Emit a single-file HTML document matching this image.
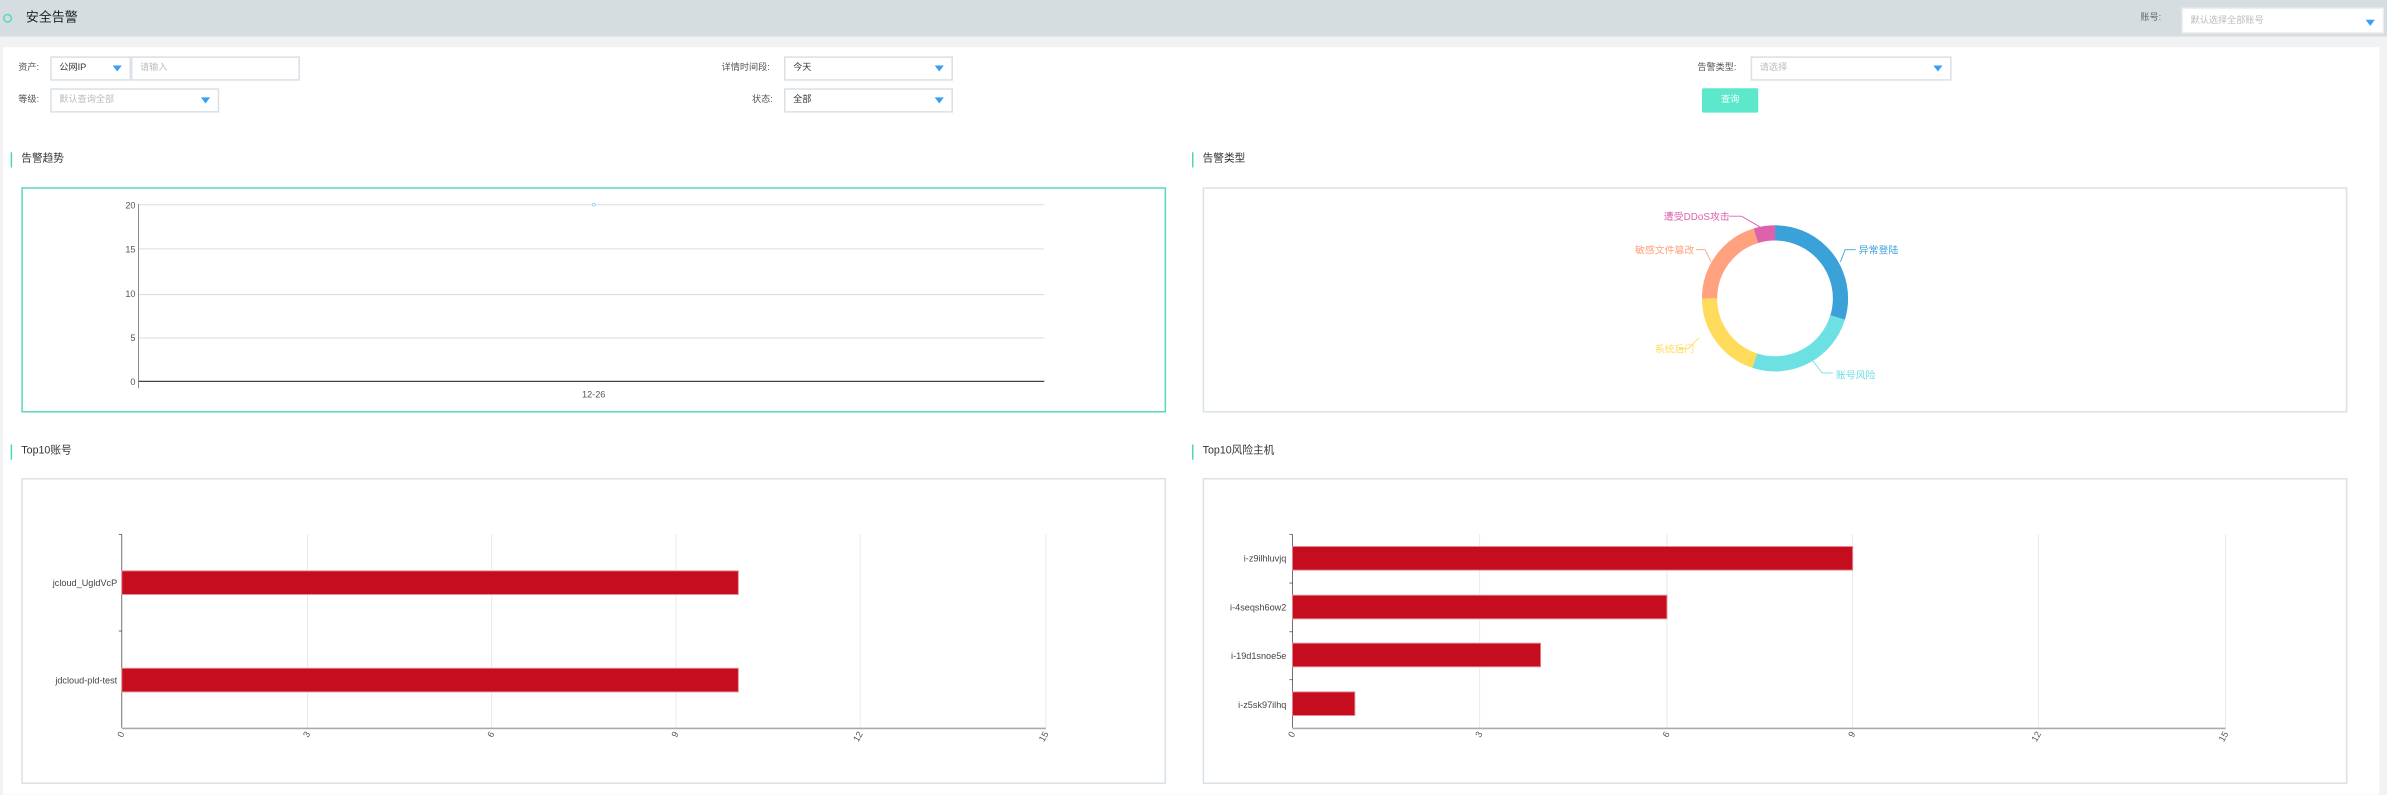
<!DOCTYPE html>
<html><head><meta charset="utf-8">
<style>
html,body{margin:0;padding:0;width:2387px;height:794px;overflow:hidden;background:#f1f2f4;}
#w{position:absolute;left:0;top:0;width:1568px;height:522px;transform:scale(1.52232);transform-origin:0 0;font-family:"Liberation Sans","Noto Sans CJK SC",sans-serif;color:#333;}
.a{position:absolute;}
.t{position:absolute;font-size:6px;color:#555;white-space:nowrap;line-height:1;}
.sel{position:absolute;background:#fff;border:1px solid #d9e0e6;box-sizing:border-box;font-size:6px;line-height:14px;padding-left:5px;color:#333;}
.ph{color:#bbb;}
.arr{position:absolute;right:5px;top:5px;width:0;height:0;border-left:3.5px solid transparent;border-right:3.5px solid transparent;border-top:4px solid #3a9ff2;}
.sec{position:absolute;font-size:7px;color:#333;padding-left:6px;border-left:1.2px solid #4fd5b8;line-height:10px;}
.card{position:absolute;background:#fff;border:1px solid #dae2e8;box-sizing:border-box;}
</style></head><body>
<div id="w">
<div class="a" style="left:0;top:0;width:1568px;height:24px;background:#d5dde1"></div>
<div class="a" style="left:2px;top:31px;width:1561px;height:491px;background:#fff"></div>
<div class="a" style="left:2px;top:8.5px;width:4px;height:4px;border:1.3px solid #5cd9bb;border-radius:50%"></div>
<div class="t" style="left:17px;top:7px;font-size:8.5px;color:#222">安全告警</div>
<div class="t" style="left:1406px;top:9px;font-size:6px;color:#666">账号:</div>
<div class="sel" style="left:1433px;top:5px;width:133px;height:17px;border-color:#eee;line-height:17px"><span class="ph">默认选择全部账号</span><div class="arr" style="top:7px"></div></div>

<div class="t" style="left:12px;top:42px">资产:</div>
<div class="sel" style="left:33px;top:37px;width:53px;height:16px">公网IP<div class="arr"></div></div>
<div class="sel" style="left:86px;top:37px;width:111px;height:16px"><span class="ph">请输入</span></div>
<div class="t" style="left:12px;top:63px">等级:</div>
<div class="sel" style="left:33px;top:58px;width:111px;height:16px"><span class="ph">默认查询全部</span><div class="arr"></div></div>
<div class="t" style="left:474px;top:42px">详情时间段:</div>
<div class="sel" style="left:515px;top:37px;width:111px;height:16px">今天<div class="arr"></div></div>
<div class="t" style="left:494px;top:63px">状态:</div>
<div class="sel" style="left:515px;top:58px;width:111px;height:16px">全部<div class="arr"></div></div>
<div class="t" style="left:1115px;top:42px">告警类型:</div>
<div class="sel" style="left:1150px;top:37px;width:132px;height:16px"><span class="ph">请选择</span><div class="arr"></div></div>
<div class="a" style="left:1118px;top:58px;width:37px;height:16px;background:#5ee8cb;border-radius:1px;color:#fff;font-size:6px;text-align:center;line-height:16px">查询</div>

<div class="sec" style="left:7px;top:100px">告警趋势</div>
<div class="sec" style="left:783px;top:100px">告警类型</div>
<div class="sec" style="left:7px;top:292px">Top10账号</div>
<div class="sec" style="left:783px;top:292px">Top10风险主机</div>

<div class="card" style="left:14px;top:123px;width:752px;height:148px;border-color:#5ad8bd"></div>
<div class="card" style="left:790px;top:123px;width:752px;height:148px"></div>
<div class="card" style="left:14px;top:314px;width:752px;height:201px"></div>
<div class="card" style="left:790px;top:314px;width:752px;height:201px"></div>

<svg class="a" style="left:0;top:0" width="1568" height="522" font-family="Liberation Sans, Noto Sans CJK SC, sans-serif">
<g stroke="#ddd" stroke-width="0.7">
<line x1="91" y1="134.5" x2="686" y2="134.5"/><line x1="91" y1="163.5" x2="686" y2="163.5"/>
<line x1="91" y1="193.5" x2="686" y2="193.5"/><line x1="91" y1="222" x2="686" y2="222"/></g>
<line x1="91" y1="250.5" x2="686" y2="250.5" stroke="#444" stroke-width="0.8"/>
<line x1="91" y1="134" x2="91" y2="255" stroke="#666" stroke-width="0.5"/>
<g font-size="6" fill="#555" text-anchor="end">
<text x="89" y="137">20</text><text x="89" y="166">15</text><text x="89" y="195">10</text><text x="89" y="224">5</text><text x="89" y="253">0</text></g>
<text x="390" y="261" font-size="6" fill="#555" text-anchor="middle">12-26</text>
<circle cx="390" cy="134.5" r="1" fill="#fff" stroke="#8ccbe8" stroke-width="0.5"/>

<g fill="none" stroke-width="10">
<circle cx="1166" cy="196" r="43" stroke="#3ba1d9" stroke-dasharray="80.3 300" transform="rotate(-90 1166 196)"/>
<circle cx="1166" cy="196" r="43" stroke="#6de0e4" stroke-dasharray="68.3 300" transform="rotate(17 1166 196)"/>
<circle cx="1166" cy="196" r="43" stroke="#ffdb5c" stroke-dasharray="54 300" transform="rotate(108 1166 196)"/>
<circle cx="1166" cy="196" r="43" stroke="#ffa07f" stroke-dasharray="54.8 300" transform="rotate(180 1166 196)"/>
<circle cx="1166" cy="196" r="43" stroke="#dd62ac" stroke-dasharray="12.8 300" transform="rotate(253 1166 196)"/>
</g>
<g fill="none" stroke-width="0.6">
<polyline points="1136,142 1144,142 1156,149" stroke="#dd62ac"/>
<polyline points="1219,164 1212,164 1209,172" stroke="#3ba1d9"/>
<polyline points="1114,164 1120,164 1124,172" stroke="#ffa07f"/>
<polyline points="1103,229 1109,229 1116,222" stroke="#ffdb5c"/>
<polyline points="1204,245 1197,245 1190,236" stroke="#6de0e4"/>
</g>
<g font-size="6.5">
<text x="1093" y="144.5" fill="#dd62ac">遭受DDoS攻击</text>
<text x="1221" y="166.5" fill="#3ba1d9">异常登陆</text>
<text x="1074" y="166.5" fill="#ffa07f">敏感文件篡改</text>
<text x="1087" y="231.5" fill="#ffdb5c">系统后门</text>
<text x="1206" y="248.5" fill="#6de0e4">账号风险</text>
</g>

<g stroke="#e3e3e3" stroke-width="0.5">
<line x1="202" y1="351" x2="202" y2="478"/><line x1="323" y1="351" x2="323" y2="478"/>
<line x1="444" y1="351" x2="444" y2="478"/><line x1="565" y1="351" x2="565" y2="478"/><line x1="687" y1="351" x2="687" y2="478"/></g>
<line x1="80" y1="351" x2="80" y2="478" stroke="#444" stroke-width="0.5"/>
<line x1="80" y1="478.5" x2="687" y2="478.5" stroke="#aaa" stroke-width="1"/>
<g stroke="#444" stroke-width="0.5"><line x1="78" y1="351" x2="80" y2="351"/><line x1="78" y1="414.5" x2="80" y2="414.5"/></g>
<rect x="80" y="375" width="405" height="15.5" fill="#c50d1f" stroke="#e38a92" stroke-width="0.6"/>
<rect x="80" y="439" width="405" height="15.5" fill="#c50d1f" stroke="#e38a92" stroke-width="0.6"/>
<g font-size="6" fill="#444" text-anchor="end">
<text x="77" y="385">jcloud_UgldVcP</text><text x="77" y="449">jdcloud-pld-test</text></g>
<g font-size="6" fill="#555" text-anchor="end">
<text transform="translate(82,482) rotate(-60)">0</text><text transform="translate(204,482) rotate(-60)">3</text>
<text transform="translate(325,482) rotate(-60)">6</text><text transform="translate(446,482) rotate(-60)">9</text>
<text transform="translate(567,482) rotate(-60)">12</text><text transform="translate(689,482) rotate(-60)">15</text></g>

<g stroke="#e3e3e3" stroke-width="0.5">
<line x1="972" y1="351" x2="972" y2="478"/><line x1="1095" y1="351" x2="1095" y2="478"/>
<line x1="1217" y1="351" x2="1217" y2="478"/><line x1="1339" y1="351" x2="1339" y2="478"/><line x1="1462" y1="351" x2="1462" y2="478"/></g>
<line x1="849" y1="351" x2="849" y2="478" stroke="#444" stroke-width="0.5"/>
<line x1="849" y1="478.5" x2="1462" y2="478.5" stroke="#aaa" stroke-width="1"/>
<g stroke="#444" stroke-width="0.5"><line x1="847" y1="351" x2="849" y2="351"/><line x1="847" y1="383" x2="849" y2="383"/><line x1="847" y1="415" x2="849" y2="415"/><line x1="847" y1="446.5" x2="849" y2="446.5"/></g>
<g fill="#c50d1f" stroke="#e38a92" stroke-width="0.6">
<rect x="849" y="359" width="368" height="15.5"/><rect x="849" y="391" width="246" height="15.5"/>
<rect x="849" y="422.5" width="163" height="15.5"/><rect x="849" y="454.5" width="41" height="15.5"/></g>
<g font-size="6" fill="#444" text-anchor="end">
<text x="845" y="369">i-z9ilhluvjq</text><text x="845" y="401">i-4seqsh6ow2</text>
<text x="845" y="433">i-19d1snoe5e</text><text x="845" y="465">i-z5sk97ilhq</text></g>
<g font-size="6" fill="#555" text-anchor="end">
<text transform="translate(851,482) rotate(-60)">0</text><text transform="translate(974,482) rotate(-60)">3</text>
<text transform="translate(1097,482) rotate(-60)">6</text><text transform="translate(1219,482) rotate(-60)">9</text>
<text transform="translate(1341,482) rotate(-60)">12</text><text transform="translate(1464,482) rotate(-60)">15</text></g>
</svg>
</div>
</body></html>
